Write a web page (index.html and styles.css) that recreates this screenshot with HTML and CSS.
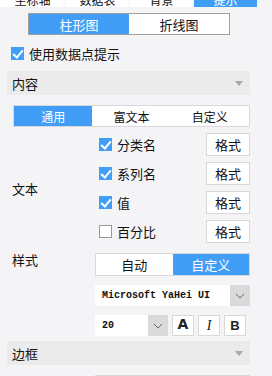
FILE: index.html
```html
<!DOCTYPE html>
<html lang="zh-CN">
<head>
    <meta charset="UTF-8">
    <meta name="viewport" content="width=device-width, initial-scale=1.0">
    <title>提示设置</title>
    <link rel="stylesheet" href="styles.css">
</head>
<body>
    <div class="tabs">
        <div class="tab">坐标轴</div>
        <div class="tab">数据表</div>
        <div class="tab">背景</div>
        <div class="tab active">提示</div>
    </div>

    <div class="chart-toggle">
        <div class="seg-item active">柱形图</div>
        <div class="seg-item">折线图</div>
    </div>

    <label class="check tip-check">
        <span class="box checked"></span>
        <span>使用数据点提示</span>
    </label>

    <div class="section-head">
        <span>内容</span>
        <span class="caret"></span>
    </div>

    <div class="seg content-seg">
        <div class="seg-item active">通用</div>
        <div class="seg-item">富文本</div>
        <div class="seg-item">自定义</div>
    </div>

    <div class="field text-field">
        <div class="field-label">文本</div>
        <div class="field-body">
            <div class="text-row">
                <label class="check"><span class="box checked"></span><span>分类名</span></label>
                <button class="btn">格式</button>
            </div>
            <div class="text-row">
                <label class="check"><span class="box checked"></span><span>系列名</span></label>
                <button class="btn">格式</button>
            </div>
            <div class="text-row">
                <label class="check"><span class="box checked"></span><span>值</span></label>
                <button class="btn">格式</button>
            </div>
            <div class="text-row">
                <label class="check"><span class="box"></span><span>百分比</span></label>
                <button class="btn">格式</button>
            </div>
        </div>
    </div>

    <div class="field style-field">
        <div class="field-label top">样式</div>
        <div class="field-body">
            <div class="seg style-seg">
                <div class="seg-item">自动</div>
                <div class="seg-item active">自定义</div>
            </div>
            <div class="select font-select">
                <span class="select-value mono">Microsoft YaHei UI</span>
                <span class="select-arrow">
                    <svg width="10" height="6" viewBox="0 0 10 6"><polyline points="1,1 5,5 9,1" fill="none" stroke="#666" stroke-width="1"/></svg>
                </span>
            </div>
            <div class="font-row">
                <div class="select size-select">
                    <span class="select-value mono">20</span>
                    <span class="select-arrow">
                        <svg width="10" height="6" viewBox="0 0 10 6"><polyline points="1,1 5,5 9,1" fill="none" stroke="#666" stroke-width="1"/></svg>
                    </span>
                </div>
                <button class="icon-btn heavy">A</button>
                <button class="icon-btn italic">I</button>
                <button class="icon-btn bold">B</button>
            </div>
        </div>
    </div>

    <div class="section-head border-head">
        <span>边框</span>
        <span class="caret"></span>
    </div>

    <div class="next-row"></div>
</body>
</html>
```

FILE: styles.css
```css
body {
    margin: 0;
    padding: 0;
    font-family: "Microsoft YaHei", "Noto Sans CJK SC", sans-serif;
    font-size: 12px;
    background-color: #f4f4f6;
    color: #111;
    overflow: hidden;
}

/* Top tabs, cut off by the window edge */
.tabs {
    display: grid;
    grid-template-columns: 65px 63px 63px 63px;
    column-gap: 1px;
    height: 15px;
    margin-top: -8px;
}

.tab {
    background: #fff;
    text-align: center;
    line-height: 15px;
}

.tab.active {
    background: #419ef7;
    color: #fff;
}

/* Segmented controls */
.chart-toggle,
.seg {
    display: flex;
    box-sizing: border-box;
    background: #fff;
}

.chart-toggle {
    margin: 6px 0 0 28px;
    width: 202px;
    height: 22px;
    border: 1px solid #a0a0a0;
    font-size: 13px;
}

.seg {
    border: 1px solid #d9d9dd;
}

.seg-item {
    flex: 1;
    display: flex;
    align-items: center;
    justify-content: center;
}

.seg-item.active {
    background: #419ef7;
    color: #fff;
}

.content-seg {
    margin: 10px 0 0 13px;
    width: 237px;
    height: 22px;
}

/* Checkboxes */
.check {
    display: flex;
    align-items: center;
    gap: 5px;
    font-size: 13px;
}

.tip-check {
    margin: 12px 0 0 11px;
    height: 13px;
}

.box {
    width: 13px;
    height: 13px;
    box-sizing: border-box;
    border: 1px solid #999;
    background: #fff;
    flex: none;
    position: relative;
}

.box.checked {
    background: #419ef7;
    border-color: #419ef7;
}

.box.checked::after {
    content: "";
    position: absolute;
    left: 3px;
    top: 0px;
    width: 4px;
    height: 8px;
    border: solid #fff;
    border-width: 0 2px 2px 0;
    transform: rotate(40deg);
}

/* Collapsible section headers */
.section-head {
    margin: 11px 0 0 7px;
    width: 243px;
    height: 24px;
    box-sizing: border-box;
    padding: 0 7px 0 5px;
    background: #ebebeb;
    display: flex;
    align-items: center;
    justify-content: space-between;
    font-size: 13px;
}

.caret {
    width: 0;
    height: 0;
    border-left: 4px solid transparent;
    border-right: 4px solid transparent;
    border-top: 5px solid #a8a8a8;
}

.border-head {
    margin-top: 5px;
}

/* Label + controls rows */
.field {
    display: flex;
}

.field-label {
    width: 95px;
    box-sizing: border-box;
    padding-left: 12px;
    display: flex;
    align-items: center;
    font-size: 13px;
    flex: none;
}

.field-label.top {
    align-items: flex-start;
    line-height: 14px;
}

.field-body {
    width: 155px;
    display: flex;
    flex-direction: column;
}

.text-field {
    margin-top: 6px;
}

.text-field .field-body {
    gap: 6px;
    padding-left: 4px;
    width: 151px;
}

.text-row {
    display: flex;
    align-items: center;
    justify-content: space-between;
    height: 23px;
}

.btn {
    width: 44px;
    height: 23px;
    box-sizing: border-box;
    border: 1px solid #d8d8d8;
    background: #fff;
    font-family: inherit;
    font-size: 13px;
    color: #111;
    padding: 0;
}

.style-field {
    margin-top: 10px;
}

.style-field .field-body {
    gap: 9px;
}

.style-seg {
    height: 23px;
    font-size: 13px;
}

/* Selects */
.select {
    display: flex;
    height: 21px;
    box-sizing: border-box;
    background: #fff;
}

.select-value {
    flex: 1;
    display: flex;
    align-items: center;
    padding-left: 7px;
}

.select-arrow {
    width: 20px;
    background: #dadadd;
    display: flex;
    align-items: center;
    justify-content: center;
}

.mono {
    font-family: "Liberation Mono", monospace;
    font-size: 10px;
    font-weight: bold;
}

.font-row {
    display: flex;
    gap: 4px;
}

.size-select {
    width: 73px;
}

.icon-btn {
    width: 22px;
    height: 21px;
    box-sizing: border-box;
    border: 1px solid #d8d8d8;
    background: #fff;
    padding: 0;
    color: #222;
    font-size: 13px;
}

.icon-btn.heavy {
    font-family: "DejaVu Sans", sans-serif;
    font-weight: 900;
    font-size: 14px;
    line-height: 14px;
    padding-bottom: 4px;
}

.icon-btn.italic {
    font-family: "Liberation Serif", serif;
    font-style: italic;
    font-size: 14px;
}

.icon-btn.bold {
    font-family: "Liberation Sans", sans-serif;
    font-weight: bold;
}

.next-row {
    margin: 10px 0 0 95px;
    width: 155px;
    height: 20px;
    background: #fff;
    border-top: 1px solid #d8d8d8;
}
```
